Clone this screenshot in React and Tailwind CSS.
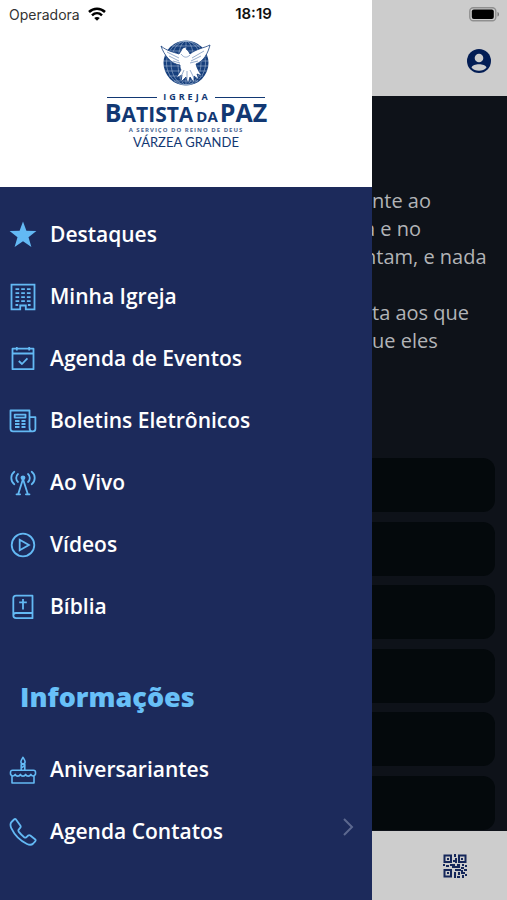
import React from "react";

const stroke = {
  width: 28,
  height: 28,
  viewBox: "0 0 28 28",
  fill: "none",
  stroke: "currentColor",
  strokeWidth: 1.8,
  strokeLinejoin: "round",
  "aria-hidden": true,
};

const StarIcon = () => (
  <svg {...stroke} fill="currentColor" stroke="none">
    <path d="M14 .5l3.400 9.300 10 .3-7.900 6.100 2.900 9.700L14 20.200l-8.400 5.700 2.900-9.700L.6 10.100l10-.3z" />
  </svg>
);

const BuildingIcon = () => (
  <svg {...stroke} strokeLinejoin="miter">
    <path d="M2.500 1.700h23v24.600h-8.700v-3.800h-5.600v3.800H2.500z" />
    <path d="M6.500 6.200h3.700m2 0h3.700m2 0h3.700M6.500 10.200h3.700m2 0h3.700m2 0h3.700M6.500 14.200h3.700m2 0h3.700m2 0h3.700M6.500 18.200h3.700m2 0h3.700m2 0h3.700M6.500 22h2.700m9.700 0h2.700" />
  </svg>
);

const CalendarIcon = () => (
  <svg {...stroke}>
    <path d="M3.500 3.700h21v20.500h-21zM3.500 8.500h21M7.800 2v3.400M20.200 2v3.400" />
    <path d="M9.800 16l3.200 3 5.400-5.700" />
  </svg>
);

const NewspaperIcon = () => (
  <svg {...stroke}>
    <path d="M20.500 21V3.500h-19v18.200c0 1.700.8 2.600 2.500 2.600h19.700c1.600 0 2.700-.9 2.700-2.600V10.200h-5.900M20.500 20.500c0 2 .8 3.600 2.600 3.800" />
    <path d="M5.700 7.600h10.800v3H5.700z" />
    <path d="M6 14h4.500m2 0h4M6 17h4.500m2 0h4M6 20h4.500m2 0h4" />
  </svg>
);

const AntennaIcon = () => (
  <svg {...stroke} strokeLinecap="round">
    <path d="M14 10L9.300 24.800M14 10l4.700 14.800M7.500 25.300h3.600M16.900 25.300h3.600" />
    <circle cx="14" cy="8.800" r="1.500" fill="currentColor" />
    <path d="M5.300 2.800c-4 3-4 9.400 0 12.400M9 5c-2.400 2-2.400 6 0 8M22.700 2.800c4 3 4 9.400 0 12.400M19 5c2.400 2 2.400 6 0 8" />
  </svg>
);

const PlayIcon = () => (
  <svg {...stroke} strokeLinejoin="miter">
    <circle cx="14" cy="14" r="11.300" />
    <path d="M10.700 8.800v10.400l9.200-5.200z" />
  </svg>
);

const BibleIcon = () => (
  <svg {...stroke}>
    <path d="M23.500 20V2.700H7c-1.800 0-2.700.9-2.700 2.600v17c0 1.800 1 2.900 2.800 2.900h16.400V20H6.800c-1.500 0-2.500.8-2.500 2.500" />
    <path d="M14 6v10.500M10.200 9.400h7.600" />
  </svg>
);

const CakeIcon = () => (
  <svg {...stroke} strokeWidth="1.600">
    <path d="M3 19.500V27h22v-7.500M3.500 14.200h21c1.200 0 2 .8 2 2v1.900c-1 2.500-3.700 2.500-4.700.3-1 2.300-4.200 2.300-5.200 0-1 2.300-4.200 2.300-5.200 0-1 2.300-4.200 2.300-5.200 0-1 2.200-3.700 2.200-4.700-.3v-1.900c0-1.200.8-2 2-2z" />
    <path d="M12.200 14V8.500h3.600V14M12.200 12l3.600-2.300M14 1.300c-1 1.600-2.100 3-2.100 4.500 0 2.800 4.200 2.800 4.200 0 0-1.500-1.100-2.900-2.100-4.500z" />
  </svg>
);

const PhoneIcon = () => (
  <svg {...stroke}>
    <path d="M7 1.500c-.6-.6-1.400-.5-2 0L2.500 4C1 5.500 1.400 8 2.300 10.200 5.500 17 11 22.700 18 26c2 .9 4.700 1 6.200-.5l2-2.200c.6-.7.5-1.500-.2-2.100l-4.700-3.700c-.7-.5-1.500-.5-2.100 0l-2 1.800c-.7.6-1.300.4-2-.1-2-1.600-4-3.600-5.500-5.600-.5-.7-.5-1.300 0-2l1.600-1.900c.5-.6.500-1.400 0-2.100z" />
  </svg>
);

const mainItems = [
  { label: "Destaques", Icon: StarIcon },
  { label: "Minha Igreja", Icon: BuildingIcon },
  { label: "Agenda de Eventos", Icon: CalendarIcon },
  { label: "Boletins Eletrônicos", Icon: NewspaperIcon },
  { label: "Ao Vivo", Icon: AntennaIcon },
  { label: "Vídeos", Icon: PlayIcon },
  { label: "Bíblia", Icon: BibleIcon },
];

const infoItems = [
  { label: "Aniversariantes", Icon: CakeIcon },
  { label: "Agenda Contatos", Icon: PhoneIcon, more: true },
];

function MenuList({ items }) {
  return (
    <ul>
      {items.map(({ label, Icon, more }) => (
        <li key={label}>
          <button type="button" className="flex h-[62px] w-full items-center pl-[9px] pr-4 text-left">
            <span className="shrink-0 pt-[2px] text-[#63b9f4]">
              <Icon />
            </span>
            <span className="ml-[13px] grow text-[21px] leading-7 font-semibold text-white">{label}</span>
            {more && (
              <svg width="16" height="28" viewBox="0 0 16 28" fill="none" stroke="#5c688f" strokeWidth="2" aria-hidden="true">
                <path d="M4 2l8 8-8 8" />
              </svg>
            )}
          </button>
        </li>
      ))}
    </ul>
  );
}

function DoveGlobe() {
  return (
    <svg width="52" height="48" viewBox="0 0 52 48" aria-hidden="true">
      <circle cx="26" cy="24" r="22.500" fill="#163f7d" />
      <g fill="none" stroke="#b9cae0" strokeWidth=".5">
        <ellipse cx="26" cy="24" rx="8" ry="22" />
        <ellipse cx="26" cy="24" rx="15" ry="22" />
        <ellipse cx="26" cy="24" rx="19.500" ry="22" />
        <path d="M12 7h28M8 12h36M5 17h42M4 22h44M4 27h44M5 32h42M9 37h34M14 42h24M26 2v44" />
      </g>
      <path
        d="M1 7c6 5 12 6 18 8l2-3c1-3 3-4 6-4l-1 2c2 1 3 3 4 5 6-5 14-6 20-9-2 8-6 16-14 19 1 5 4 9 6 12l-5-2 2 6-5-4v7l-4-6-2 7-2-7-5 5 1-7-6 3 5-8c-1-2-1-3-1-5C11 25 4 16 1 7z"
        fill="#fff"
        stroke="#163f7d"
        strokeWidth=".8"
      />
      <path
        d="M7 13l12 6M9 17l10 5M13 22l7 2M44 12l-12 7M41 17l-10 5M38 22l-8 2M24 31l-4 9M27 32v8M30 31l4 8M21 15c3 4 6 4 9 1"
        fill="none"
        stroke="#7b97bf"
        strokeWidth=".8"
      />
    </svg>
  );
}

function Logo() {
  return (
    <div className="flex flex-col items-center text-[#123873]">
      <DoveGlobe />
      <div className="mt-[5px] flex w-[158px] items-center gap-1">
        <span className="h-px grow bg-[#123873]" />
        <span className="pl-[2px] text-[9px] leading-[10px] font-bold tracking-[3px]">IGREJA</span>
        <span className="h-px grow bg-[#123873]" />
      </div>
      <div className="flex items-baseline leading-[20px] font-bold whitespace-nowrap">
        <span className="text-[25px]">B</span>
        <span className="text-[21px]">ATISTA</span>
        <span className="ml-[3px] text-[15px]">DA</span>
        <span className="ml-[2px] text-[25px]">PAZ</span>
      </div>
      <div className="mt-px text-[6px] leading-[6px] font-bold tracking-[1px] whitespace-nowrap text-[#4a6592] uppercase">
        A Serviço do Reino de Deus
      </div>
      <div className="font-['Lato','Open_Sans',sans-serif] text-[13px] leading-[18px]">VÁRZEA GRANDE</div>
    </div>
  );
}

function StatusBar() {
  return (
    <div className="absolute inset-x-0 top-0 z-10 grid h-7 grid-cols-3 items-center px-[7px] font-['Inter',sans-serif] text-[15px] text-[#111]">
      <div className="flex items-center gap-2 pl-[2px] text-[14px] text-[#333]">
        <span>Operadora</span>
        <svg width="18" height="14" viewBox="0 0 18 14" fill="none" stroke="#000" strokeWidth="2.500" aria-hidden="true">
          <path d="M1 5c4.500-4.300 11.500-4.300 16 0M4 8.300c2.900-2.700 7.100-2.700 10 0" />
          <path d="M9 13.700L6.200 11c1.600-1.500 4-1.500 5.600 0z" fill="#000" stroke="none" />
        </svg>
      </div>
      <div className="text-center font-semibold">18:19</div>
      <svg className="justify-self-end" width="31" height="15" viewBox="0 0 31 15" aria-hidden="true">
        <rect x=".8" y=".8" width="26" height="13" rx="3.500" fill="none" stroke="#8f8f8f" strokeWidth="1.400" />
        <rect x="2.800" y="2.600" width="22" height="9.400" rx="2" fill="#000" />
        <path d="M28.500 5v4.600c2-.7 2-3.900 0-4.600z" fill="#777" />
      </svg>
    </div>
  );
}

function QrIcon() {
  return (
    <svg width="24" height="24" viewBox="0 0 24 24" aria-hidden="true">
      <g fill="none" stroke="#15275a" strokeWidth="2">
        <path d="M1.500 1.500h6.500v6.500h-6.500zM16 1.500h6.500v6.500h-6.500zM1.500 16h6.500v6.500h-6.500z" />
      </g>
      <path
        fill="#15275a"
        d="M4 4h2v2H4zM18 4h2v2h-2zM4 18h2v2H4zM11 0h2v3h-2zM12 4h2v5h-2zM10 6h2v2h-2zM0 10h2v2H0zM3 11h3v2H3zM7 10h5v2H7zM9 12h8v2H9zM14 10h3v2h-3zM19 10h2v2h-2zM22 11h2v2h-2zM18 13h3v2h-3zM12 15h6v2h-6zM11 18h2v6h-2zM15 18h2v3h-2zM14 22h3v2h-3zM18 16h2v4h-2zM21 15h3v2h-3zM20 18h2v2h-2zM22 20h2v2h-2zM19 21h2v3h-2z"
      />
    </svg>
  );
}

const verse = [
  { text: "nte ao" },
  { text: "a e no", cut: true },
  { text: "ntam, e nada", cut: true },
  { text: "\u00a0" },
  { text: "ta aos que" },
  { text: "ue eles" },
];

export default function App() {
  return (
    <div className="relative flex min-h-screen w-full overflow-hidden bg-[#0e1219] font-['Open_Sans',sans-serif]">
      <StatusBar />

      <aside className="flex w-[372px] shrink-0 flex-col bg-[#1c2a5b]">
        <header className="flex h-[187px] flex-col items-center bg-white pt-[39px]">
          <Logo />
        </header>
        <nav className="grow pt-4 pb-9">
          <MenuList items={mainItems} />
          <h2 className="pt-[42px] pb-[23px] pl-5 text-[27px] leading-9 font-extrabold text-[#68c0f8]">Informações</h2>
          <MenuList items={infoItems} />
        </nav>
      </aside>

      <main className="flex min-w-0 grow flex-col overflow-hidden">
        <header className="flex h-24 items-end justify-end bg-[#ccc] pr-4 pb-[23px]">
          <button type="button" aria-label="Perfil">
            <svg width="24" height="24" viewBox="0 0 24 24" aria-hidden="true">
              <circle cx="12" cy="12" r="12" fill="#031d54" />
              <circle cx="12" cy="9" r="4.300" fill="#ccc" />
              <path d="M4.500 18.500c1.500-4.400 13.500-4.400 15 0-3.300 4.300-11.700 4.300-15 0z" fill="#ccc" />
            </svg>
          </button>
        </header>

        <div className="pt-[91px] text-[20px] leading-7 text-[#b2b4b7]">
          {verse.map(({ text, cut }, i) => (
            <p key={i} className={cut ? "-ml-2 whitespace-nowrap" : "whitespace-nowrap"}>
              {text}
            </p>
          ))}
        </div>

        <div className="mt-[103px] flex grow flex-col justify-between pr-3 pb-px">
          {[0, 1, 2, 3, 4, 5].map((n) => (
            <div key={n} className="h-[54px] rounded-r-xl bg-[#04090c]" />
          ))}
        </div>

        <footer className="flex h-[69px] items-center justify-end bg-[#cdcdcd] pr-10">
          <button type="button" aria-label="QR Code">
            <QrIcon />
          </button>
        </footer>
      </main>
    </div>
  );
}
